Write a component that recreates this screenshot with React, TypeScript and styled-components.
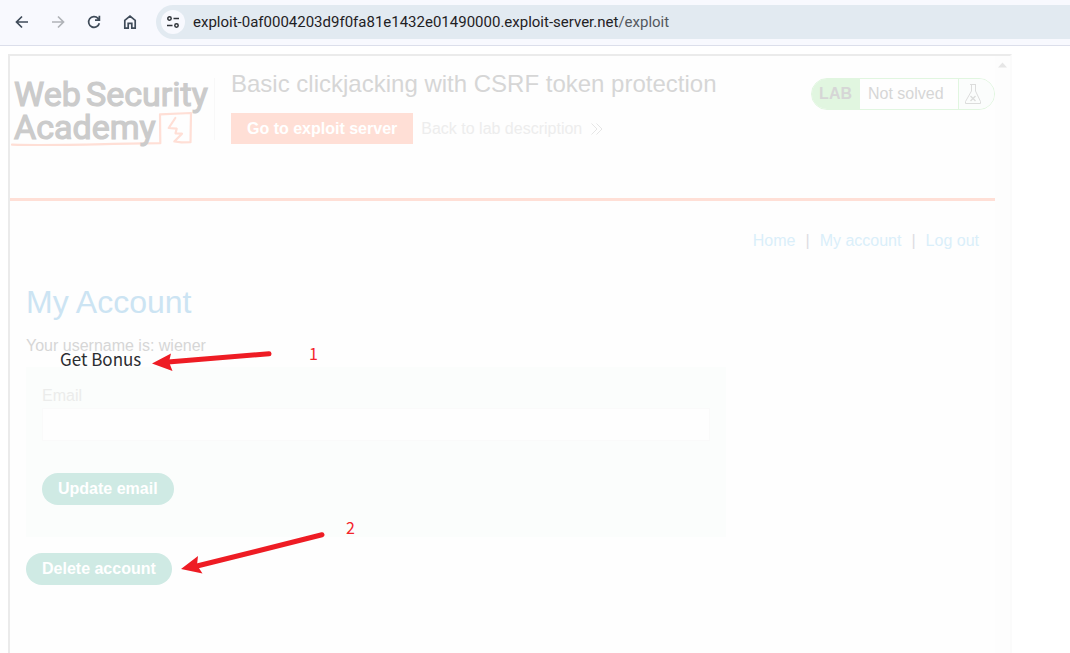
import React from "react";
import styled, { createGlobalStyle } from "styled-components";

const GlobalStyle = createGlobalStyle`
  *, *::before, *::after { box-sizing: border-box; }
  body {
    margin: 0;
    background: #fff;
    font-family: "Liberation Sans", Arial, sans-serif;
    font-size: 16px;
    line-height: 20px;
  }
  h1, h2, p { margin: 0; font-weight: 400; }
`;

const Browser = styled.div`
  display: flex;
  flex-direction: column;
  height: 100vh;
  overflow: hidden;
`;

const Toolbar = styled.div`
  display: flex;
  align-items: center;
  flex: none;
  height: 46px;
  padding: 0 0 1px 13px;
  background: #f8f9fe;
  border-bottom: 1px solid #dcdfeb;
`;

const ToolButton = styled.button<{ $muted?: boolean }>`
  display: flex;
  align-items: center;
  justify-content: center;
  width: 18px;
  height: 18px;
  margin-right: 18px;
  padding: 0;
  border: 0;
  background: none;
  color: ${(p) => (p.$muted ? "#b0b3b8" : "#3f4b59")};
`;

const AddressBar = styled.div`
  display: flex;
  align-items: center;
  flex: 1;
  height: 34px;
  margin-left: -1px;
  padding-left: 5px;
  border-radius: 17px 0 0 17px;
  background: #e2eaf1;
`;

const SiteInfo = styled.button`
  display: flex;
  align-items: center;
  justify-content: center;
  width: 24px;
  height: 24px;
  margin-right: 8px;
  padding: 0;
  border: 0;
  border-radius: 12px;
  background: #f8f9fe;
  color: #2f3338;
`;

const Url = styled.span`
  font-family: Roboto, "Open Sans", sans-serif;
  font-size: 15px;
  color: #1f2124;
`;

const UrlPath = styled.span`
  color: #53585e;
`;

const Page = styled.main`
  position: relative;
  display: flex;
  flex: 1;
  min-height: 0;
  padding: 8px 8px 0;
`;

const Frame = styled.div`
  display: flex;
  flex: 1;
  max-width: 1004px;
  border: 2px solid #fbfbfb;
  border-top-color: #ebebeb;
  border-left-color: #ebebeb;
  border-bottom: 0;
  background: #fefefe;
`;

const FrameContent = styled.div`
  flex: 1;
`;

const ScrollTrack = styled.div`
  display: flex;
  justify-content: center;
  width: 15px;
  padding-top: 6px;
  background: #fdfdfd;
`;

const LabHeader = styled.header`
  display: flex;
  align-items: flex-start;
  height: 145px;
  border-bottom: 3px solid #ffdfd6;
`;

const LogoLink = styled.a`
  flex: none;
  height: 96px;
  margin-right: 15px;
  text-decoration: none;
`;

const LabInfo = styled.div`
  flex: 1;
  padding-top: 14px;
`;

const LabTitle = styled.h2`
  margin-bottom: 15px;
  color: #d6d6d6;
  font-size: 24px;
  line-height: 28px;
`;

const LabActions = styled.div`
  display: flex;
  align-items: center;
  gap: 8px;
`;

const ExploitLink = styled.a`
  padding: 6px 16px 5px;
  background: #ffdfd6;
  color: #fff;
  font-weight: 700;
  text-decoration: none;
`;

const BackLink = styled.a`
  display: flex;
  align-items: center;
  gap: 9px;
  color: #ededed;
  text-decoration: none;
`;

const LabStatus = styled.div`
  display: flex;
  align-items: stretch;
  height: 32px;
  margin-top: 22px;
  overflow: hidden;
  border: 1px solid #e1f6e0;
  border-radius: 16px;
  background: #fefefe;
  color: #d6d6d6;
  line-height: 30px;
`;

const LabBadge = styled.strong`
  padding: 0 8px 0 7px;
  background: #e1f6e0;
`;

const LabState = styled.span`
  width: 98px;
  padding-left: 8px;
`;

const LabFlask = styled.span`
  display: flex;
  align-items: center;
  width: 36px;
  padding-left: 6px;
  border-left: 1px solid #e1f6e0;
  background: #fbfdfc;
`;

const Nav = styled.nav`
  display: flex;
  justify-content: flex-end;
  gap: 10px;
  padding: 30px 16px 30px;
  color: #dddce2;
`;

const NavLink = styled.a`
  color: #daeffa;
  text-decoration: none;
`;

const Account = styled.section`
  display: flex;
  flex-direction: column;
  align-items: flex-start;
  padding: 0 16px;
`;

const AccountTitle = styled.h1`
  margin-bottom: 14px;
  padding-top: 1px;
  color: #cce4f3;
  font-size: 32px;
  line-height: 40px;
`;

const Username = styled.p`
  margin-bottom: 11px;
  color: #d6d6d6;
`;

const EmailForm = styled.form`
  display: flex;
  flex-direction: column;
  align-items: flex-start;
  width: 100%;
  max-width: 700px;
  margin-bottom: 16px;
  padding: 19px 16px 32px;
  background: #fbfdfc;
`;

const Label = styled.label`
  margin-bottom: 2px;
  color: #ebeceb;
`;

const EmailInput = styled.input`
  width: 100%;
  height: 33px;
  margin-bottom: 32px;
  padding: 0 8px;
  border: 1px solid #fafafa;
  background: #fefefe;
  font: inherit;
`;

const PillButton = styled.button`
  height: 32px;
  padding: 0 16px;
  border: 0;
  border-radius: 16px;
  background: #cfeae4;
  color: #fff;
  font: inherit;
  font-weight: 700;
`;

const Decoy = styled.div`
  position: absolute;
  top: 300px;
  left: 60px;
  color: #2b2d30;
  font-family: "Noto Sans CJK SC", "Noto Sans", sans-serif;
  font-size: 17px;
  line-height: 26px;
`;

const Mark = styled.span<{ $x: number; $y: number }>`
  position: absolute;
  top: ${(p) => p.$y}px;
  left: ${(p) => p.$x}px;
  color: #f4232b;
  font-family: "Noto Sans CJK SC", "Noto Sans", sans-serif;
  font-size: 16px;
`;

const Arrows = styled.svg`
  position: absolute;
  top: 300px;
  left: 150px;
  pointer-events: none;
`;

const stroke = { fill: "none", stroke: "currentColor", strokeWidth: 1.7 };

const BackIcon = () => (
  <svg width="18" height="18" viewBox="0 0 18 18" {...stroke}>
    <path d="M15 9H4M9 3.5 3.5 9 9 14.5" />
  </svg>
);

const ForwardIcon = () => (
  <svg width="18" height="18" viewBox="0 0 18 18" {...stroke}>
    <path d="M3 9h11M9 3.5 14.500 9 9 14.500" />
  </svg>
);

const ReloadIcon = () => (
  <svg width="18" height="18" viewBox="0 0 18 18" {...stroke}>
    <path d="M14.300 10.200A5.400 5.400 0 1 1 13 5.300L14.300 6.700M14.400 2.800v4.400H10" />
  </svg>
);

const HomeIcon = () => (
  <svg width="18" height="18" viewBox="0 0 18 18" {...stroke}>
    <path d="M3.800 15.200V7.300L9 3.200l5.200 4.100v7.900h-3.400V10.300H7.200v4.900Z" />
  </svg>
);

const TuneIcon = () => (
  <svg width="14" height="14" viewBox="0 0 14 14" fill="none" stroke="currentColor" strokeWidth="1.500">
    <circle cx="3.500" cy="3.500" r="1.700" />
    <path d="M7.500 3.500H13M1 10.500h5.500" />
    <circle cx="10.500" cy="10.500" r="1.700" />
  </svg>
);

const AcademyLogo = () => (
  <svg width="206" height="96" viewBox="10 56 206 96" role="img" aria-label="Web Security Academy">
    <g fill="none" stroke="#ffdfd6" strokeWidth="2.200" strokeLinejoin="round" strokeLinecap="round">
      <path d="M12 144.700C60 146 110 143.500 160.300 143.200L160 114.300 191 113 190.500 142.200 181.500 142.300 174.300 141.500 182 133.700 175.500 133.300 176.700 128.700 168.700 128 175.300 118" />
    </g>
    <g
      fill="#cbcbcb"
      stroke="#cbcbcb"
      strokeWidth="1.200"
      fontFamily="Roboto, sans-serif"
      fontSize="34"
    >
      <text x="14" y="106">Web</text>
      <text x="86" y="106">Security</text>
      <text x="14" y="139">Academy</text>
    </g>
    <path d="M214.500 78v62" stroke="#f8f8f8" />
  </svg>
);

const ChevronsIcon = () => (
  <svg width="12" height="12" viewBox="0 0 12 12" fill="none" stroke="#e6e6e6">
    <path d="M.500.500 6 6 .500 11.500M5.500.500 11 6 5.500 11.500" />
  </svg>
);

const FlaskIcon = () => (
  <svg width="17" height="20" viewBox="0 0 17 20" fill="none" stroke="#dcdddc">
    <path d="M5 .500h6M6.500.500V7L.500 17.500v2h15v-2L10.500 7V.500" />
    <path d="m5.500 12 5 5m0-5-5 5" strokeWidth="1.400" />
  </svg>
);

export default function App() {
  return (
    <>
      <GlobalStyle />
      <Browser>
        <Toolbar>
          <ToolButton aria-label="Back"><BackIcon /></ToolButton>
          <ToolButton aria-label="Forward" $muted><ForwardIcon /></ToolButton>
          <ToolButton aria-label="Reload"><ReloadIcon /></ToolButton>
          <ToolButton aria-label="Home"><HomeIcon /></ToolButton>
          <AddressBar>
            <SiteInfo aria-label="View site information"><TuneIcon /></SiteInfo>
            <Url>
              exploit-0af0004203d9f0fa81e1432e01490000.exploit-server.net<UrlPath>/exploit</UrlPath>
            </Url>
          </AddressBar>
        </Toolbar>
        <Page>
          <Frame>
            <FrameContent>
              <LabHeader>
                <LogoLink href="#"><AcademyLogo /></LogoLink>
                <LabInfo>
                  <LabTitle>Basic clickjacking with CSRF token protection</LabTitle>
                  <LabActions>
                    <ExploitLink href="#">Go to exploit server</ExploitLink>
                    <BackLink href="#">Back to lab description<ChevronsIcon /></BackLink>
                  </LabActions>
                </LabInfo>
                <LabStatus>
                  <LabBadge>LAB</LabBadge>
                  <LabState>Not solved</LabState>
                  <LabFlask><FlaskIcon /></LabFlask>
                </LabStatus>
              </LabHeader>
              <Nav>
                <NavLink href="#">Home</NavLink>
                <span>|</span>
                <NavLink href="#">My account</NavLink>
                <span>|</span>
                <NavLink href="#">Log out</NavLink>
              </Nav>
              <Account>
                <AccountTitle>My Account</AccountTitle>
                <Username>Your username is: wiener</Username>
                <EmailForm>
                  <Label htmlFor="email">Email</Label>
                  <EmailInput id="email" type="email" />
                  <PillButton type="button">Update email</PillButton>
                </EmailForm>
                <PillButton type="button">Delete account</PillButton>
              </Account>
            </FrameContent>
            <ScrollTrack>
              <svg width="9" height="6" viewBox="0 0 9 6" fill="#e6e6e6">
                <path d="M0 5.500 4.500.500 9 5.500Z" />
              </svg>
            </ScrollTrack>
          </Frame>
          <Decoy>Get Bonus</Decoy>
          <Mark $x={309} $y={297}>1</Mark>
          <Mark $x={346} $y={471}>2</Mark>
          <Arrows width="180" height="240" viewBox="150 346 180 240" fill="#ee1c24" stroke="#ee1c24">
            <path d="M269 353.800 168 362M322 534.800 196 566.300" strokeWidth="5" strokeLinecap="round" />
            <path d="M152 363.500 171 353.500 169 362 172.500 371ZM181 569 198 556 197 565 202.500 573.500Z" stroke="none" />
          </Arrows>
        </Page>
      </Browser>
    </>
  );
}
